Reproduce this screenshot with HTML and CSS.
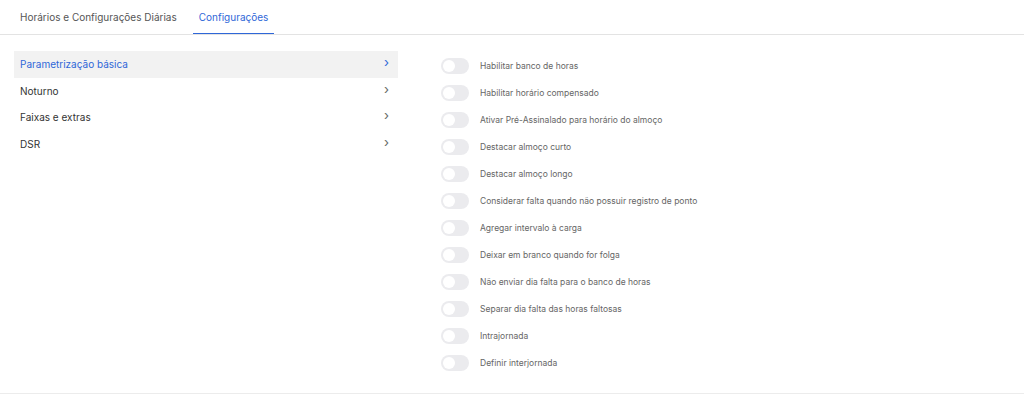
FILE: index.html
```html
<!DOCTYPE html>
<html lang="pt-BR">
<head>
  <meta charset="UTF-8">
  <title>Configurações</title>
  <link rel="stylesheet" href="styles.css">
</head>
<body>
  <div class="page">
    <div class="tabs">
      <div class="tab">Horários e Configurações Diárias</div>
      <div class="tab active">Configurações</div>
    </div>

    <div class="content">
      <ul class="menu">
        <li class="menu-item active"><span>Parametrização básica</span><span class="chev">&#x203A;</span></li>
        <li class="menu-item"><span>Noturno</span><span class="chev">&#x203A;</span></li>
        <li class="menu-item"><span>Faixas e extras</span><span class="chev">&#x203A;</span></li>
        <li class="menu-item"><span>DSR</span><span class="chev">&#x203A;</span></li>
      </ul>

      <ul class="options">
        <li class="option"><span class="switch"></span>Habilitar banco de horas</li>
        <li class="option"><span class="switch"></span>Habilitar horário compensado</li>
        <li class="option"><span class="switch"></span>Ativar Pré-Assinalado para horário do almoço</li>
        <li class="option"><span class="switch"></span>Destacar almoço curto</li>
        <li class="option"><span class="switch"></span>Destacar almoço longo</li>
        <li class="option"><span class="switch"></span>Considerar falta quando não possuir registro de ponto</li>
        <li class="option"><span class="switch"></span>Agregar intervalo à carga</li>
        <li class="option"><span class="switch"></span>Deixar em branco quando for folga</li>
        <li class="option"><span class="switch"></span>Não enviar dia falta para o banco de horas</li>
        <li class="option"><span class="switch"></span>Separar dia falta das horas faltosas</li>
        <li class="option"><span class="switch"></span>Intrajornada</li>
        <li class="option"><span class="switch"></span>Definir interjornada</li>
      </ul>
    </div>
  </div>
</body>
</html>
```

FILE: styles.css
```css
body {
  margin: 0;
  font-family: Inter, "Noto Sans", Arial, sans-serif;
  background-color: #fff;
  color: #333;
}

.page {
  height: 393px;
  border-bottom: 1px solid #ececec;
}

.tabs {
  display: flex;
  padding-left: 14px;
  border-bottom: 1px solid #e3e3e3;
  height: 34px;
}

.tab {
  font-size: 10px;
  color: #555;
  padding: 0 6px;
  margin-right: 10px;
  line-height: 34px;
  height: 33px;
}

.tab.active {
  color: #2f67d8;
  border-bottom: 1px solid #2f67d8;
}

.content {
  display: flex;
  padding: 16px 0 0 14px;
}

ul {
  list-style: none;
  margin: 0;
  padding: 0;
}

.menu {
  width: 384px;
}

.menu-item {
  display: flex;
  justify-content: space-between;
  align-items: center;
  height: 26.5px;
  padding: 0 9px 0 6px;
  font-size: 10px;
  color: #333;
}

.menu-item.active {
  background-color: #f2f2f2;
  color: #2f67d8;
}

.chev {
  font-size: 13px;
  color: #666;
  line-height: 1;
  margin-top: -3px;
}

.menu-item.active .chev {
  color: #2f67d8;
}

.options {
  margin-left: 43px;
  margin-top: 1px;
}

.option {
  display: flex;
  align-items: center;
  height: 27px;
  font-size: 8.5px;
  color: #666;
}

.switch {
  position: relative;
  width: 28px;
  height: 16px;
  border-radius: 8px;
  background-color: #ebebee;
  margin-right: 11px;
}

.switch::after {
  content: "";
  position: absolute;
  left: 2px;
  top: 2px;
  width: 12px;
  height: 12px;
  border-radius: 50%;
  background-color: #fff;
}
```
